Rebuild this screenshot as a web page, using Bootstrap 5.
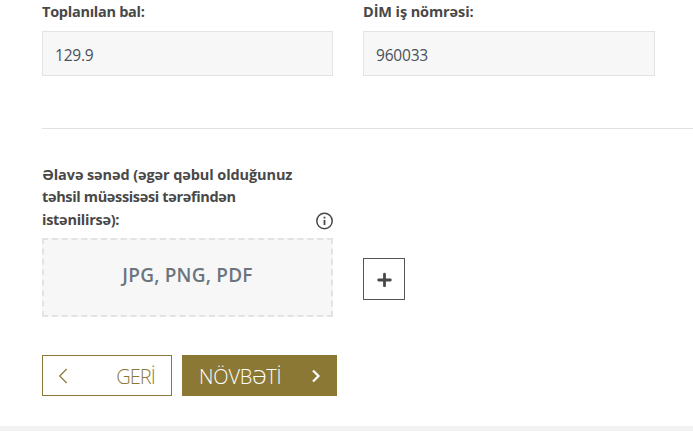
<!DOCTYPE html>
<html lang="az">
<head>
<meta charset="utf-8">
<meta name="viewport" content="width=device-width, initial-scale=1">
<title>Sənədlər</title>
<link href="https://cdn.jsdelivr.net/npm/bootstrap@5.3.0/dist/css/bootstrap.min.css" rel="stylesheet">
<style>
body { font-family: "Open Sans", "Noto Sans", sans-serif; color: #484848; height: 431px; overflow: hidden; }
.page-form { padding-left: 42px; height: 426px; }
.form-grid { display: grid; grid-template-columns: 291px 292px; column-gap: 30px; }
.field-label { font-size: 14.5px; font-weight: 700; line-height: 22.5px; margin: 0; white-space: nowrap; letter-spacing: -.27px; }
.form-grid .field-label[for] { height: 31px; padding-top: 1px; }
.label-wide { letter-spacing: -.1px; }
.label-tight { letter-spacing: -.35px; }
.field-box { height: 45px; padding: 2px 12px 0; font-size: 15.5px; letter-spacing: -.2px; color: #495057; background: #f7f7f7; border-color: #e3e3e3; }
.field-box:focus { box-shadow: none; }
.divider { margin: 52px 0 0; border-top: 1px solid #dee2e6; opacity: 1; }
.file-grid { padding-top: 34px; }
.file-label { height: 75px; padding-bottom: 7px; }
.info-icon { margin-bottom: 1px; }
.drop-zone { height: 79px; background: #f7f7f7; border: 2px dashed #e3e3e3; color: #6c757d; font-size: 19px; letter-spacing: .22px; font-weight: 600; padding-bottom: 4px; }
.add-btn { width: 42px; height: 42px; border: 1px solid #555; background: #fff; margin-bottom: 17px; }
.nav-row { margin-top: 38px; gap: 10px; }
.nav-btn { height: 41px; font-size: 20px; font-weight: 300; border: 1px solid #8b7834; line-height: 1; }
.nav-btn span { padding-top: 2px; }
.back-btn { width: 130px; color: #8b7834; padding: 0 16px 0 15px; letter-spacing: -.9px; }
.next-btn { width: 155px; background: #8b7834; color: #fff; padding: 0 15px 0 16px; letter-spacing: -.15px; }
.page-foot { height: 5px; background: #f2f2f2; }
</style>
</head>
<body class="bg-white">
<main class="page-form">
  <div class="form-grid">
    <div>
      <label class="field-label d-block" for="score">Toplanılan bal:</label>
      <input class="form-control rounded-0 field-box" id="score" value="129.9" readonly>
    </div>
    <div>
      <label class="field-label label-wide d-block" for="job">DİM iş nömrəsi:</label>
      <input class="form-control rounded-0 field-box" id="job" value="960033" readonly>
    </div>
  </div>
  <hr class="divider">
  <div class="form-grid file-grid">
    <div>
      <div class="d-flex justify-content-between align-items-end file-label">
        <div class="field-label"><span class="label-wide">Əlavə sənəd (əgər qəbul olduğunuz</span><br><span class="label-tight">təhsil müəssisəsi tərəfindən</span><br>istənilirsə):</div>
        <svg class="info-icon flex-shrink-0" width="18" height="18" viewBox="0 0 18 18" fill="none" stroke="#484848"><circle cx="9.500" cy="9" r="7.7" stroke-width="1.5"/><path d="M9.500 8v5M9.500 4.800v1.800" stroke-width="1.8"/></svg>
      </div>
      <div class="drop-zone d-flex align-items-center justify-content-center"><span>JPG, PNG, PDF</span></div>
    </div>
    <div class="d-flex align-items-end">
      <button class="add-btn p-0 d-flex align-items-center justify-content-center" type="button" aria-label="+">
        <svg width="16" height="16" viewBox="0 0 16 16" stroke="#484848" stroke-width="2.8" stroke-linecap="round"><path d="M8.500 3.200v11.600M2.700 9h11.600"/></svg>
      </button>
    </div>
  </div>
  <div class="d-flex nav-row">
    <button class="btn rounded-0 nav-btn back-btn d-flex align-items-center justify-content-between" type="button">
      <svg width="10" height="16" viewBox="0 0 10 16" fill="none" stroke="#8b7834" stroke-width="1.2"><path d="M8.700 1 1.700 8l7 7"/></svg><span>GERİ</span>
    </button>
    <button class="btn rounded-0 nav-btn next-btn d-flex align-items-center justify-content-between" type="button">
      <span>NÖVBƏTİ</span><svg width="10" height="14" viewBox="0 0 10 14" fill="none" stroke="#fff" stroke-width="2.2"><path d="m2 1.500 5.500 5.500L2 12.500"/></svg>
    </button>
  </div>
</main>
<div class="page-foot"></div>
<script src="https://cdn.jsdelivr.net/npm/bootstrap@5.3.0/dist/js/bootstrap.bundle.min.js"></script>
</body>
</html>
